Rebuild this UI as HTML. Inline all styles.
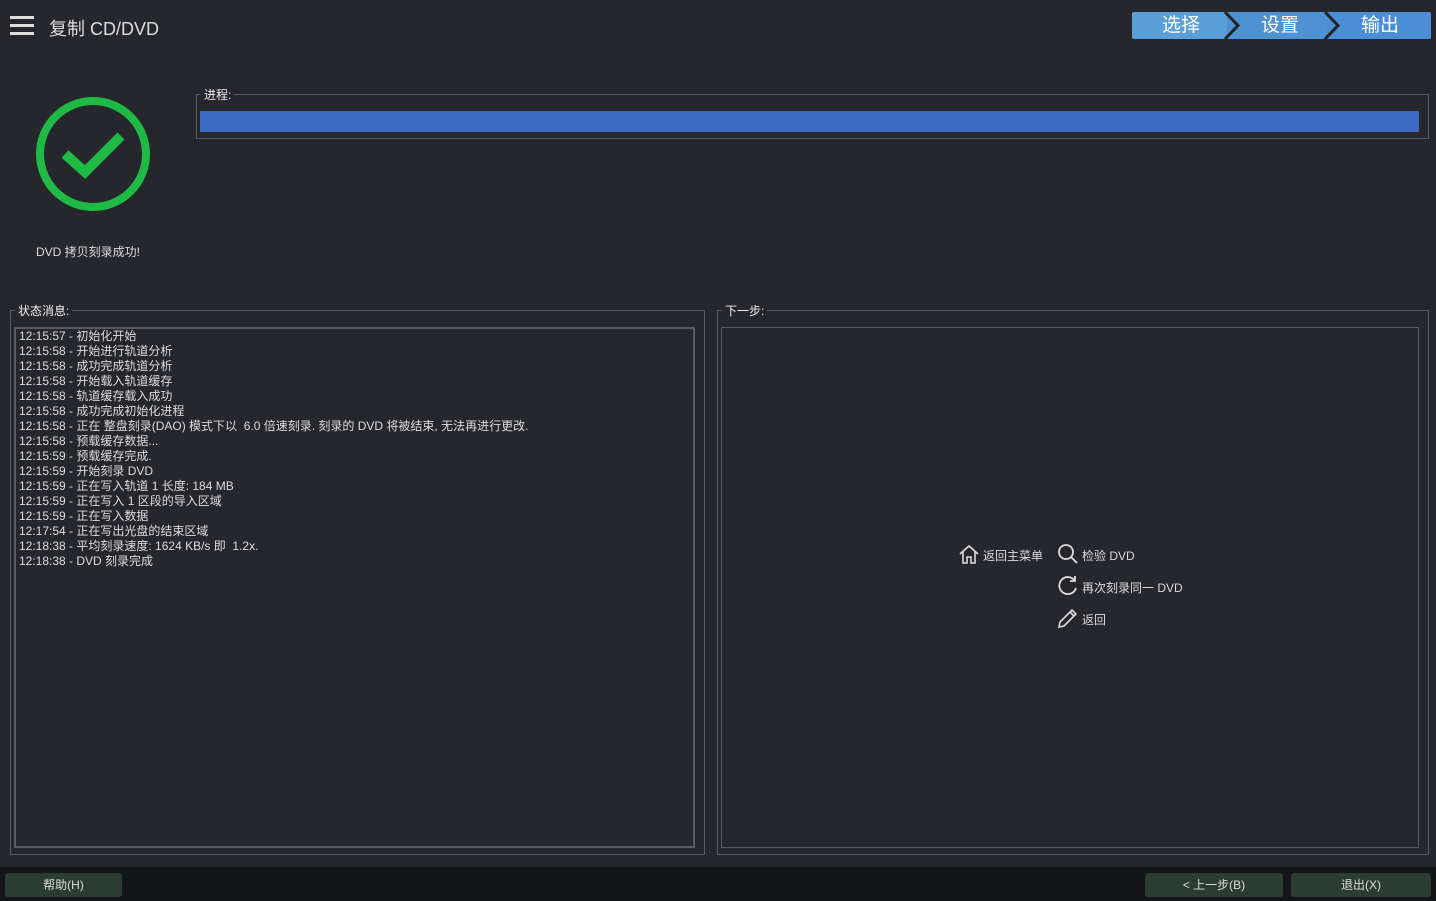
<!DOCTYPE html>
<html><head><meta charset="utf-8"><style>
*{margin:0;padding:0;box-sizing:border-box}
body{width:1436px;height:901px;background:#26272c;font-family:"Liberation Sans","Noto Sans CJK SC",sans-serif;color:#e6e6e6;position:relative;overflow:hidden;font-size:12px}
.abs{position:absolute}
.fs{position:absolute;border:1px solid #5a5b60}
.lg{position:absolute;background:#26272c;padding:0 3px;font-size:12px;color:#eee}
.tab{position:absolute;top:12px;height:27px;color:#fff;font-size:19px;line-height:27px;text-align:center}
.btn{position:absolute;top:873px;height:24px;background:#2b3d33;border-radius:3px;color:#ddd;font-size:12px;line-height:24px;text-align:center}
.log div{height:15px;line-height:15px;font-size:12px;color:#ddd}
.act{position:absolute;font-size:12px;color:#ddd}
</style></head><body>
<div class="abs" style="left:10px;top:16px;width:24px;height:3px;background:#ddd"></div>
<div class="abs" style="left:10px;top:24px;width:24px;height:3px;background:#ddd"></div>
<div class="abs" style="left:10px;top:32px;width:24px;height:3px;background:#ddd"></div>
<div class="abs" style="left:49px;top:15px;font-size:18px;color:#ddd">复制 CD/DVD</div>

<svg class="abs" style="left:1132px;top:12px" width="300" height="27">
<rect x="0" y="0" width="299" height="27" rx="2" fill="#5b9fd8"/>
<rect x="95" y="0" width="100" height="27" fill="#4f92d4"/>
<rect x="195" y="0" width="104" height="27" rx="2" fill="#4b8ed6"/>
<polyline points="93,0 106,13.5 93,27" fill="none" stroke="#222" stroke-width="3"/>
<polyline points="193,0 206,13.5 193,27" fill="none" stroke="#222" stroke-width="3"/>
</svg>
<div class="tab" style="left:1132px;width:98px">选择</div>
<div class="tab" style="left:1230px;width:100px">设置</div>
<div class="tab" style="left:1330px;width:100px">输出</div>

<svg class="abs" style="left:33px;top:94px" width="120" height="120">
<circle cx="60" cy="60" r="53" fill="none" stroke="#1fba45" stroke-width="8"/>
<polyline points="32,60 52,78 88,42" fill="none" stroke="#1fba45" stroke-width="10" stroke-linejoin="miter"/>
</svg>
<div class="abs" style="left:36px;top:243px;color:#ddd">DVD 拷贝刻录成功!</div>

<div class="fs" style="left:196px;top:94px;width:1233px;height:45px"></div>
<div class="lg" style="left:201px;top:86px">进程:</div>
<div class="abs" style="left:200px;top:111px;width:1219px;height:21px;background:#3b6bc2"></div>

<div class="fs" style="left:10px;top:310px;width:695px;height:545px"></div>
<div class="lg" style="left:15px;top:302px">状态消息:</div>
<div class="abs" style="left:14px;top:327px;width:681px;height:521px;border:2px solid #5a5b60"></div>
<div class="abs log" style="left:19px;top:329px">
<div>12:15:57 - 初始化开始</div>
<div>12:15:58 - 开始进行轨道分析</div>
<div>12:15:58 - 成功完成轨道分析</div>
<div>12:15:58 - 开始载入轨道缓存</div>
<div>12:15:58 - 轨道缓存载入成功</div>
<div>12:15:58 - 成功完成初始化进程</div>
<div>12:15:58 - 正在 整盘刻录(DAO) 模式下以 &nbsp;6.0 倍速刻录. 刻录的 DVD 将被结束, 无法再进行更改.</div>
<div>12:15:58 - 预载缓存数据...</div>
<div>12:15:59 - 预载缓存完成.</div>
<div>12:15:59 - 开始刻录 DVD</div>
<div>12:15:59 - 正在写入轨道 1 长度: 184 MB</div>
<div>12:15:59 - 正在写入 1 区段的导入区域</div>
<div>12:15:59 - 正在写入数据</div>
<div>12:17:54 - 正在写出光盘的结束区域</div>
<div>12:18:38 - 平均刻录速度: 1624 KB/s 即 &nbsp;1.2x.</div>
<div>12:18:38 - DVD 刻录完成</div>
</div>

<div class="fs" style="left:717px;top:310px;width:712px;height:545px"></div>
<div class="lg" style="left:722px;top:302px">下一步:</div>
<div class="abs" style="left:721px;top:327px;width:698px;height:521px;border:1px solid #5a5b60"></div>

<svg class="abs" style="left:958px;top:543px" width="22" height="22" fill="none" stroke="#ddd" stroke-width="1.6"><path d="M2 11 L11 3 L20 11 M5 9 V20 H9 V14 H13 V20 H17 V9"/></svg>
<div class="act" style="left:983px;top:547px">返回主菜单</div>
<svg class="abs" style="left:1056px;top:542px" width="24" height="24" fill="none" stroke="#ddd" stroke-width="1.8"><circle cx="10" cy="10" r="7"/><path d="M15 15 L21 21"/></svg>
<div class="act" style="left:1082px;top:547px">检验 DVD</div>
<svg class="abs" style="left:1056px;top:574px" width="24" height="24" fill="none" stroke="#ddd" stroke-width="1.8"><path d="M19 7 A8.5 8.5 0 1 0 20 14"/><path d="M19 2 V7 H14"/></svg>
<div class="act" style="left:1082px;top:579px">再次刻录同一 DVD</div>
<svg class="abs" style="left:1056px;top:606px" width="24" height="24" fill="none" stroke="#ddd" stroke-width="1.6"><path d="M3 21 L4 16 L16 4 L20 8 L8 20 Z M14 6 L18 10"/></svg>
<div class="act" style="left:1082px;top:611px">返回</div>

<div class="abs" style="left:0;top:867px;width:1436px;height:34px;background:#141519"></div>
<div class="btn" style="left:5px;width:117px">帮助(H)</div>
<div class="btn" style="left:1145px;width:138px">&lt; 上一步(B)</div>
<div class="btn" style="left:1291px;width:140px">退出(X)</div>
</body></html>
